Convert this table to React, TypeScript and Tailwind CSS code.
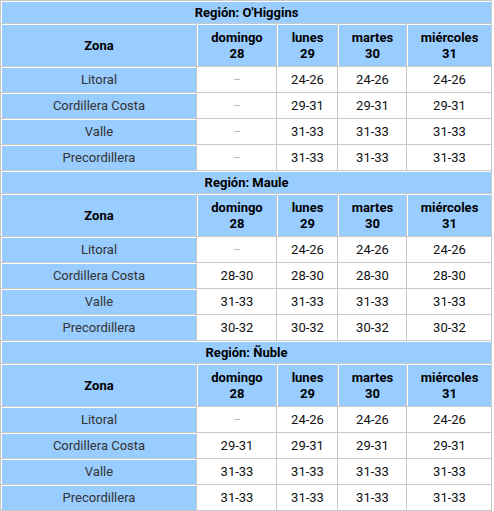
const days = [
  { name: 'domingo', num: 28 },
  { name: 'lunes', num: 29 },
  { name: 'martes', num: 30 },
  { name: 'miércoles', num: 31 },
];

type Region = { name: string; rows: [string, string[]][] };

const regions: Region[] = [
  {
    name: "O'Higgins",
    rows: [
      ['Litoral', ['-', '24-26', '24-26', '24-26']],
      ['Cordillera Costa', ['-', '29-31', '29-31', '29-31']],
      ['Valle', ['-', '31-33', '31-33', '31-33']],
      ['Precordillera', ['-', '31-33', '31-33', '31-33']],
    ],
  },
  {
    name: 'Maule',
    rows: [
      ['Litoral', ['-', '24-26', '24-26', '24-26']],
      ['Cordillera Costa', ['28-30', '28-30', '28-30', '28-30']],
      ['Valle', ['31-33', '31-33', '31-33', '31-33']],
      ['Precordillera', ['30-32', '30-32', '30-32', '30-32']],
    ],
  },
  {
    name: 'Ñuble',
    rows: [
      ['Litoral', ['-', '24-26', '24-26', '24-26']],
      ['Cordillera Costa', ['29-31', '29-31', '29-31', '29-31']],
      ['Valle', ['31-33', '31-33', '31-33', '31-33']],
      ['Precordillera', ['31-33', '31-33', '31-33', '31-33']],
    ],
  },
];

const cell = 'border-t border-l border-white p-0 text-center align-middle';

export default function App() {
  return (
    <div className="h-[511px] overflow-hidden bg-white font-['Roboto',sans-serif] text-[13px] text-[#222]">
      <table className="table-fixed w-[492px] border-separate border-spacing-[1px] bg-[#c8c8c8]">
        <colgroup>
          <col className="w-[195px]" />
          <col className="w-[79px]" />
          <col className="w-[60px]" />
          <col className="w-[68px]" />
          <col className="w-[84px]" />
        </colgroup>
        {regions.map((r) => (
          <tbody key={r.name}>
            <tr>
              <th colSpan={5} className={`${cell} h-[22px] bg-[#99ccff] font-bold text-black`}>
                Región: {r.name}
              </th>
            </tr>
            <tr>
              <th className={`${cell} h-[42px] bg-[#99ccff] font-bold text-black`}>Zona</th>
              {days.map((d) => (
                <th key={d.name} className={`${cell} bg-[#99ccff] font-bold text-black leading-4`}>
                  {d.name}
                  <br />
                  {d.num}
                </th>
              ))}
            </tr>
            {r.rows.map(([zona, vals]) => (
              <tr key={zona}>
                <td className={`${cell} h-[25px] bg-[#99ccff] text-[#333]`}>{zona}</td>
                {vals.map((v, i) => (
                  <td key={i} className={`${cell} bg-white ${v === '-' ? 'text-[#bbb]' : 'text-[#111]'}`}>
                    {v === '-' ? '–' : v}
                  </td>
                ))}
              </tr>
            ))}
          </tbody>
        ))}
        <tbody>
          <tr>
            <th colSpan={5} className={`${cell} h-[22px] bg-[#99ccff]`} />
          </tr>
        </tbody>
      </table>
    </div>
  );
}
